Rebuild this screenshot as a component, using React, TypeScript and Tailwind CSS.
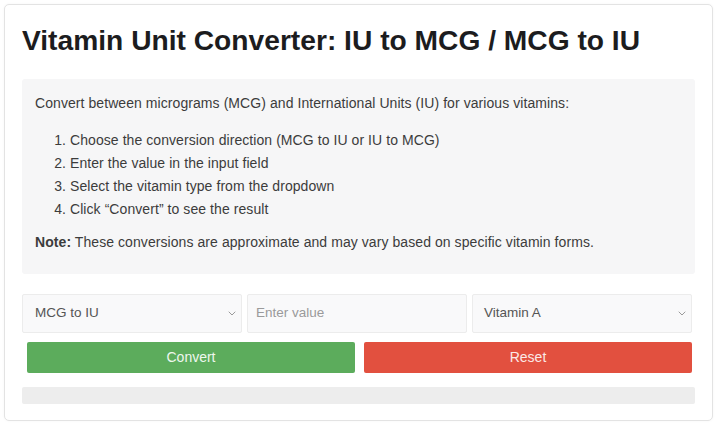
import React from "react";

function Chevron() {
  return (
    <svg width="8" height="5" viewBox="0 0 8 5" fill="none" className="shrink-0">
      <path d="M1 1 L4 4 L7 1" stroke="#9a9a9a" strokeWidth="1" strokeLinecap="round" strokeLinejoin="round" />
    </svg>
  );
}

export default function App() {
  return (
    <div className="w-[720px] h-[425px] bg-white overflow-hidden pt-[4px] pl-[4px]" style={{ fontFamily: '"Liberation Sans", Arial, Helvetica, sans-serif' }}>
      <div className="w-[709px] h-[417px] border border-[#e3e3e3] rounded-[5px] bg-white px-[17px] pt-[17px] shadow-[0_0_3px_rgba(0,0,0,0.04)]">
        <h1 className="text-[28.2px] leading-[36px] font-bold text-[#1c1c1e] mb-[21px]">
          Vitamin Unit Converter: IU to MCG / MCG to IU
        </h1>
        <div className="bg-[#f6f6f7] rounded-[3px] pl-[13px] pr-[13px] pt-[13px] pb-[20px] text-[14px] leading-[23px] tracking-[0.07px] text-[#3c3c3c] h-[195px]">
          <p>Convert between micrograms (MCG) and International Units (IU) for various vitamins:</p>
          <ol className="list-decimal pl-[35px] mt-[14px]">
            <li>Choose the conversion direction (MCG to IU or IU to MCG)</li>
            <li>Enter the value in the input field</li>
            <li>Select the vitamin type from the dropdown</li>
            <li>Click “Convert” to see the result</li>
          </ol>
          <p className="mt-[10px]"><span className="font-bold">Note:</span> These conversions are approximate and may vary based on specific vitamin forms.</p>
        </div>
        <div className="grid grid-cols-3 gap-[5px] pr-[3px] mt-[20px] h-[39px]">
          <div className="flex items-center justify-between border border-[#ececec] bg-[#f9f9fa] rounded-[2px] pl-[12px] pr-[5px] text-[13.5px] text-[#555]">
            <span>MCG to IU</span>
            <Chevron />
          </div>
          <div className="flex items-center border border-[#ececec] bg-[#f9f9fa] rounded-[2px] pl-[8px] text-[13.5px] text-[#9a9a9a]">
            <span>Enter value</span>
          </div>
          <div className="flex items-center justify-between border border-[#ececec] bg-[#f9f9fa] rounded-[2px] pl-[11px] pr-[5px] text-[13.5px] text-[#555]">
            <span>Vitamin A</span>
            <Chevron />
          </div>
        </div>
        <div className="grid grid-cols-2 gap-[9px] pl-[5px] pr-[3px] mt-[9px] h-[31px]">
          <div className="flex items-center justify-center bg-[#5cac5c] rounded-[2px] text-[14px] text-[#eef7ee]">Convert</div>
          <div className="flex items-center justify-center bg-[#e2503f] rounded-[2px] text-[14px] text-[#fbe9e6]">Reset</div>
        </div>
        <div className="mt-[14px] h-[17px] bg-[#ededed] rounded-[2px]" />
      </div>
    </div>
  );
}
